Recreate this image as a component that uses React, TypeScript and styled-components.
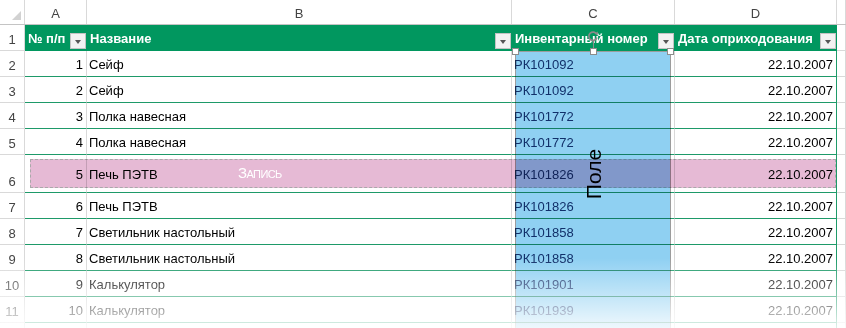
import React from 'react';
import styled, { createGlobalStyle } from 'styled-components';

const GREEN = '#01975f';
const GRID = '#d9d9d9';
const COLS = '25px 62px 425px 163px 162px 9px';

const GlobalStyle = createGlobalStyle`
  html, body {
    margin: 0;
    padding: 0;
    background: #fff;
  }
  body {
    font-family: 'Liberation Sans', Arial, sans-serif;
  }
`;

const items: [number, string, string][] = [
  [1, 'Сейф', 'РК101092'],
  [2, 'Сейф', 'РК101092'],
  [3, 'Полка навесная', 'РК101772'],
  [4, 'Полка навесная', 'РК101772'],
  [5, 'Печь ПЭТВ', 'РК101826'],
  [6, 'Печь ПЭТВ', 'РК101826'],
  [7, 'Светильник настольный', 'РК101858'],
  [8, 'Светильник настольный', 'РК101858'],
  [9, 'Калькулятор', 'РК101901'],
  [10, 'Калькулятор', 'РК101939'],
];

const App = () => (
  <>
    <GlobalStyle />
    <Sheet>
      <ColumnHeaders>
        <Corner>
          <CornerMark />
        </Corner>
        {['A', 'B', 'C', 'D'].map((l) => (
          <ColLetter key={l}>{l}</ColLetter>
        ))}
        <ColLetter />
      </ColumnHeaders>

      <Row $h={26}>
        <RowHead>1</RowHead>
        <HeadCell>
          <span>№ п/п</span>
          <FilterButton />
        </HeadCell>
        <HeadCell>
          <span>Название</span>
          <FilterButton />
        </HeadCell>
        <HeadCell>
          <span>Инвентарный номер</span>
          <FilterButton />
        </HeadCell>
        <HeadCell>
          <span>Дата оприходования</span>
          <FilterButton />
        </HeadCell>
        <Filler />
      </Row>

      {items.map(([n, name, code], i) => (
        <Row key={n} $h={n === 5 ? 38 : 26}>
          <RowHead>{i + 2}</RowHead>
          <Cell $align="right">{n}</Cell>
          <Cell>{name}</Cell>
          <Cell $code>{code}</Cell>
          <Cell $align="right" $last>
            22.10.2007
          </Cell>
          <Filler />
        </Row>
      ))}

      <Row $h={26}>
        <RowHead />
        <Cell />
        <Cell />
        <Cell />
        <Cell $last />
        <Filler />
      </Row>

      <RecordBar />
      <RecordLabel>Запись</RecordLabel>

      <FieldColumn />
      <FieldLabel>Поле</FieldLabel>
      <Handle style={{ left: 512 }} />
      <Handle style={{ left: 590 }} />
      <Handle style={{ left: 667 }} />
      <RotateStem />
      <RotateHandle viewBox="0 0 12 12">
        <path d="M9.8 4.4 A4.2 4.2 0 1 0 10 7.6" fill="none" stroke="#8a8a8a" strokeWidth="1.7" />
        <path d="M7.4 3.4 L10.6 5 L11 1.4 Z" fill="#8a8a8a" />
      </RotateHandle>

      <Fade />
    </Sheet>
  </>
);

const Sheet = styled.div`
  position: relative;
  width: 846px;
  height: 328px;
  overflow: hidden;
  background: #fff;
  font-size: 13px;
  color: #000;
`;

const ColumnHeaders = styled.div`
  display: grid;
  grid-template-columns: ${COLS};
  height: 25px;
  box-sizing: border-box;
  border-bottom: 1px solid #c4c4c4;
`;

const Corner = styled.div`
  position: relative;
  border-right: 1px solid ${GRID};
`;

const CornerMark = styled.div`
  position: absolute;
  right: 3px;
  bottom: 4px;
  width: 0;
  height: 0;
  border-left: 9px solid transparent;
  border-bottom: 9px solid #d2d2d2;
`;

const ColLetter = styled.div`
  display: flex;
  align-items: center;
  justify-content: center;
  border-right: 1px solid ${GRID};
  color: #444;
  font-size: 13px;
  padding-top: 2px;
`;

const Row = styled.div<{ $h: number }>`
  display: grid;
  grid-template-columns: ${COLS};
  height: ${(p) => p.$h}px;
`;

const RowHead = styled.div`
  display: flex;
  align-items: flex-end;
  justify-content: center;
  padding-bottom: 3px;
  box-sizing: border-box;
  border-right: 1px solid ${GRID};
  border-bottom: 1px solid ${GRID};
  color: #444;
  font-size: 13px;
`;

const HeadCell = styled.div`
  display: flex;
  align-items: center;
  justify-content: space-between;
  padding: 0 1px 0 3px;
  background: ${GREEN};
  color: #fff;
  font-weight: bold;
  font-size: 13px;
  white-space: nowrap;
  overflow: hidden;
`;

const FilterButton = styled.div`
  position: relative;
  flex: none;
  width: 16px;
  height: 16px;
  margin-top: 5px;
  box-sizing: border-box;
  background: #f2f2f2;
  border: 1px solid #c3c3c3;

  &::after {
    content: '';
    position: absolute;
    left: 4px;
    top: 6px;
    border-left: 3.5px solid transparent;
    border-right: 3.5px solid transparent;
    border-top: 4px solid #555;
  }
`;

const Cell = styled.div<{ $align?: 'left' | 'right'; $code?: boolean; $last?: boolean }>`
  display: flex;
  align-items: center;
  justify-content: ${(p) => (p.$align === 'right' ? 'flex-end' : 'flex-start')};
  padding: 1px 3px 0 2px;
  box-sizing: border-box;
  border-bottom: 1px solid #1e9a69;
  border-right: 1px solid ${(p) => (p.$last ? '#1e9a69' : GRID)};
  color: ${(p) => (p.$code ? '#1e3b70' : '#000')};
  white-space: nowrap;
`;

const Filler = styled.div`
  border-right: 1px solid ${GRID};
  border-bottom: 1px solid ${GRID};
`;

const RecordBar = styled.div`
  position: absolute;
  left: 30px;
  top: 159px;
  width: 806px;
  height: 29px;
  box-sizing: border-box;
  background: #e6bad5;
  border: 1px dashed #a9a9a9;
  mix-blend-mode: multiply;
`;

const RecordLabel = styled.div`
  position: absolute;
  left: 238px;
  top: 164px;
  color: #fff;
  font-size: 15px;
  font-variant: small-caps;
  letter-spacing: -0.6px;
`;

const FieldColumn = styled.div`
  position: absolute;
  left: 515px;
  top: 51px;
  width: 156px;
  height: 290px;
  box-sizing: border-box;
  background: #8fd0f2;
  border: 1px solid #9c9c9c;
  mix-blend-mode: multiply;
`;

const FieldLabel = styled.div`
  position: absolute;
  left: 594px;
  top: 174px;
  transform: translate(-50%, -50%) rotate(-90deg);
  font-size: 21px;
  color: #000;
  white-space: nowrap;
`;

const Handle = styled.div`
  position: absolute;
  top: 48px;
  width: 7px;
  height: 7px;
  box-sizing: border-box;
  background: #fff;
  border: 1px solid #8c8c8c;
`;

const RotateStem = styled.div`
  position: absolute;
  left: 593px;
  top: 41px;
  width: 1px;
  height: 7px;
  background: #8c8c8c;
`;

const RotateHandle = styled.svg`
  position: absolute;
  left: 587px;
  top: 30px;
  width: 12px;
  height: 12px;
`;

const Fade = styled.div`
  position: absolute;
  left: 0;
  right: 0;
  top: 258px;
  bottom: 0;
  background: linear-gradient(to bottom, rgba(255, 255, 255, 0), rgba(255, 255, 255, 0.85));
  pointer-events: none;
`;

export default App;
